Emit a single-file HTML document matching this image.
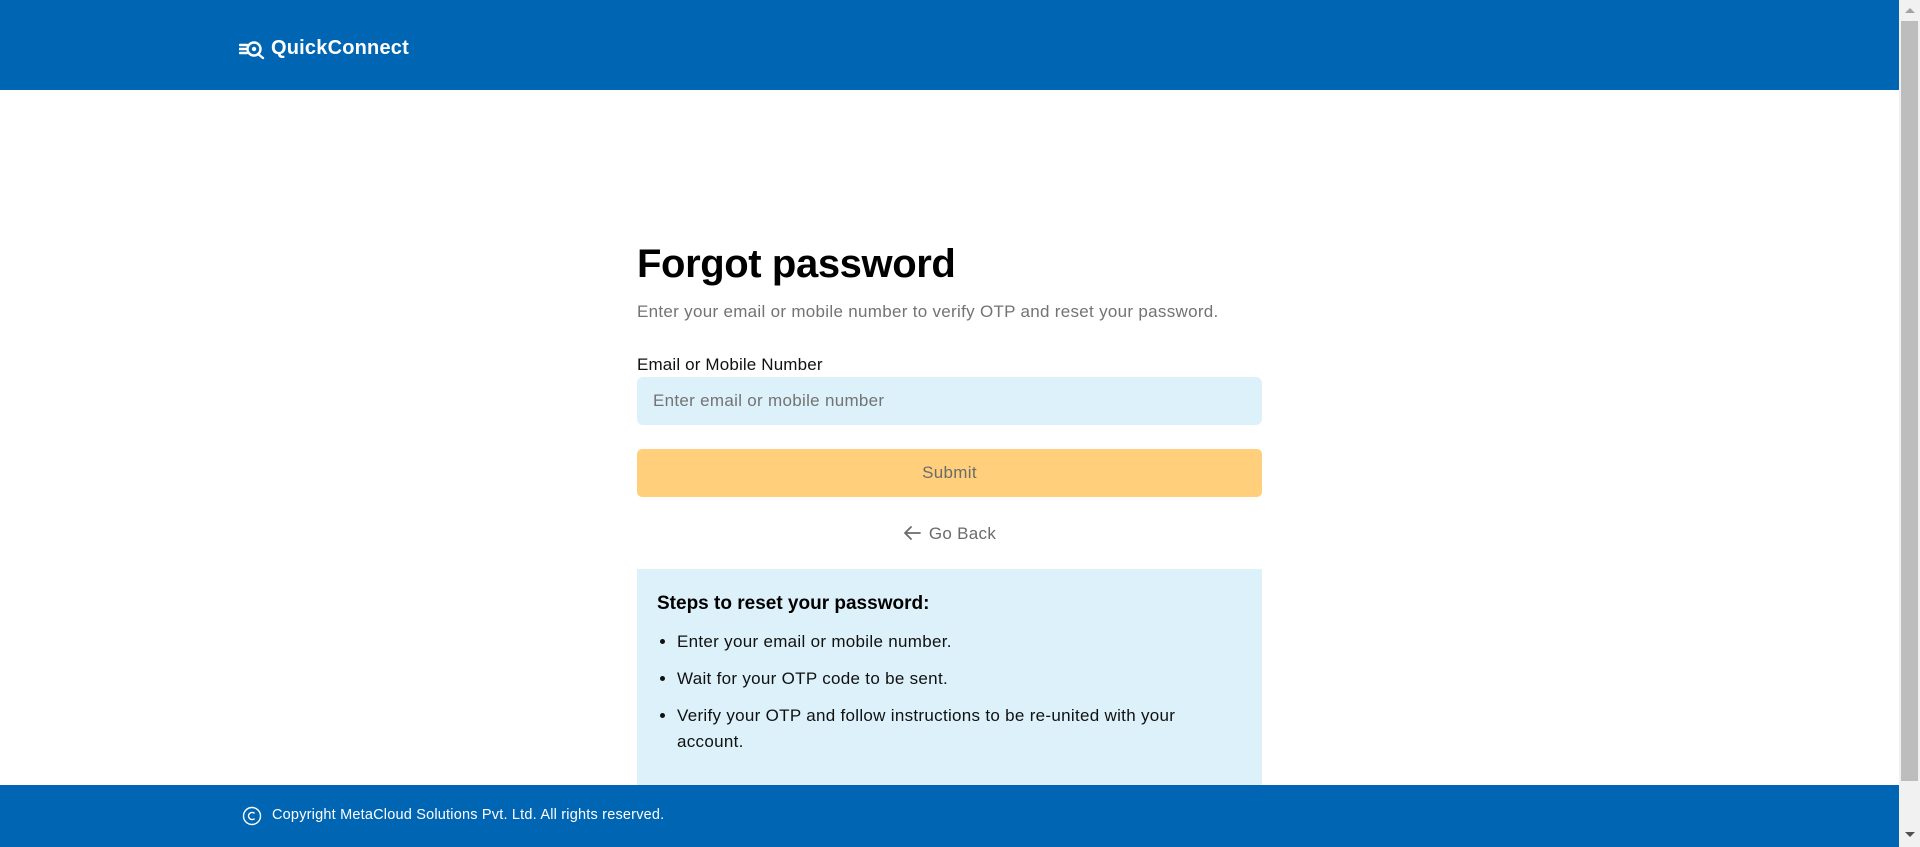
<!DOCTYPE html>
<html><head><meta charset="utf-8"><style>
*{margin:0;padding:0;box-sizing:border-box}
body{width:1920px;height:847px;overflow:hidden;font-family:"Liberation Sans",Arial,sans-serif;background:#fff;position:relative;letter-spacing:0.3px}
.hdr{position:absolute;left:0;top:0;width:1899px;height:90px;background:#0066b3}
.logo{position:absolute;left:239px;top:37px;color:#fff;font-weight:bold;font-size:20px;display:flex;align-items:center;gap:4px;letter-spacing:0.2px}
.sb{position:absolute;right:0;top:0;width:21px;height:847px;background:#f1f1f1}
.thumb{position:absolute;left:2px;top:21px;width:17px;height:760px;background:#bdbdbd}
.up{position:absolute;left:6px;top:8px;border-left:5px solid transparent;border-right:5px solid transparent;border-bottom:5px solid #a3a3a3}
.dn{position:absolute;left:6px;top:832px;border-left:5px solid transparent;border-right:5px solid transparent;border-top:5px solid #505050}
.col{position:absolute;left:637px;width:625px}
h1{position:absolute;left:637px;top:242px;font-size:40px;font-weight:bold;color:#000;letter-spacing:-0.4px}
.sub{top:302px;font-size:17px;color:#737373;letter-spacing:0.3px}
.lbl{top:355px;font-size:17px;color:#111;letter-spacing:0.15px}
.inp{top:377px;height:48px;background:#dcf1fa;border-radius:6px;font-size:17px;color:#737373;padding:14px 16px}
.btn{top:449px;height:48px;background:#ffcf7c;border-radius:5px;font-size:17px;color:#6b6b6b;text-align:center;line-height:48px}
.back{top:524px;text-align:center;font-size:17px;color:#6b6b6b}
.box{top:569px;height:216px;background:#dcf1fa;padding:24px 20px}
.box h3{font-size:19px;font-weight:bold;color:#000;margin-bottom:14px;letter-spacing:0}
.box ul{padding-left:20px;padding-right:55px;font-size:17px;color:#111;line-height:26px}
.box li{margin-bottom:11px}
.ftr{position:absolute;left:0;top:785px;width:1899px;height:62px;background:#0066b3;color:#fff;font-size:14.5px;letter-spacing:0.2px}
.ftr .t{position:absolute;left:272px;top:22px}
</style></head><body>
<div class="hdr"><div class="logo">
<svg width="28" height="22" viewBox="0 0 28 22"><g stroke="#fff" stroke-width="2.4" fill="none" stroke-linecap="round"><line x1="1" y1="7" x2="8" y2="7"/><line x1="0" y1="11" x2="7" y2="11"/><line x1="1" y1="15" x2="8" y2="15"/><circle cx="15" cy="11" r="6.5"/><line x1="19" y1="16" x2="24" y2="20"/></g><circle cx="15" cy="11" r="2.2" fill="#fff"/></svg>
<span>QuickConnect</span></div></div>
<h1>Forgot password</h1>
<div class="col sub">Enter your email or mobile number to verify OTP and reset your password.</div>
<div class="col lbl">Email or Mobile Number</div>
<div class="col inp">Enter email or mobile number</div>
<div class="col btn">Submit</div>
<div class="col back"><svg width="20" height="16" viewBox="0 0 20 16" style="vertical-align:-2px;margin-right:6px"><g stroke="#6b6b6b" stroke-width="1.8" fill="none" stroke-linecap="round" stroke-linejoin="round"><path d="M17 8H3M8 2L2 8l6 6"/></g></svg>Go Back</div>
<div class="col box"><h3>Steps to reset your password:</h3><ul>
<li>Enter your email or mobile number.</li>
<li>Wait for your OTP code to be sent.</li>
<li>Verify your OTP and follow instructions to be re-united with your account.</li></ul></div>
<div class="ftr"><span class="t">Copyright MetaCloud Solutions Pvt. Ltd. All rights reserved.</span></div>
<svg width="20" height="20" viewBox="0 0 20 20" style="position:absolute;left:242px;top:806px"><circle cx="10" cy="10" r="8.5" stroke="#fff" stroke-width="1.4" fill="none"/><path d="M12.6 7.4a3.6 3.6 0 1 0 0 5.2" stroke="#fff" stroke-width="1.4" fill="none"/></svg>
<div class="sb"><div class="up"></div><div class="thumb"></div><div class="dn"></div></div>
</body></html>
